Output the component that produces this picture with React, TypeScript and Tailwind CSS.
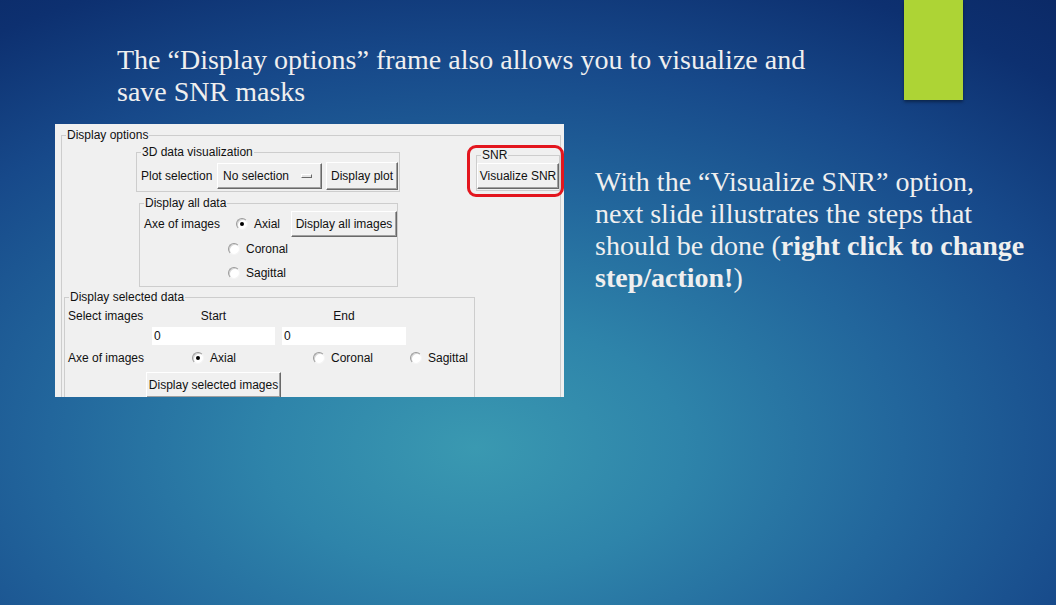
import React from "react";

const raised =
  "flex items-center border border-t-white border-l-white border-r-[#696969] border-b-[#696969] bg-[#f0f0f0] shadow-[inset_-1px_-1px_0_#a0a0a0]";

function Frame({
  label,
  className,
  children,
}: {
  label: string;
  className: string;
  children: React.ReactNode;
}) {
  return (
    <fieldset className={`border border-[#cdcdcd] ${className}`}>
      <legend className="ml-[4px] px-[1px] leading-[14px]">{label}</legend>
      {children}
    </fieldset>
  );
}

function Radio({ label, checked }: { label: string; checked?: boolean }) {
  return (
    <span className="flex items-center gap-[6px]">
      <span className="flex h-[12px] w-[12px] items-center justify-center rounded-full border border-t-[#9a9a9a] border-l-[#9a9a9a] border-r-[#f4f4f4] border-b-[#f4f4f4] bg-white shadow-[inset_1px_1px_0_#d4d4d4]">
        {checked && <span className="h-[4px] w-[4px] rounded-full bg-black" />}
      </span>
      <span>{label}</span>
    </span>
  );
}

function Panel() {
  return (
    <div className="relative h-[273px] w-[509px] shrink-0 overflow-hidden bg-[#f0f0f0] font-['Liberation_Sans',Arial,sans-serif] text-[12px] leading-[14px] text-[#111]">
      <Frame label="Display options" className="ml-[6px] mt-[4px] h-[300px] w-[500px]">
        <div className="flex">
          <div className="ml-[74px] flex flex-col">
            {/* 3D data visualization */}
            <Frame label="3D data visualization" className="mt-[3px] w-[264px] pb-[1px]">
              <div className="mt-[3px] flex h-[28px] items-center pl-[4px]">
                <span className="w-[76px]">Plot selection</span>
                <div className={`${raised} h-[26px] w-[105px] justify-between pl-[5px] pr-[9px]`}>
                  <span>No selection</span>
                  <span className="h-[4px] w-[11px] border border-t-white border-l-white border-r-[#696969] border-b-[#696969] bg-[#e4e4e4]" />
                </div>
                <div className={`${raised} ml-[4px] h-[28px] w-[72px] justify-center`}>Display plot</div>
              </div>
            </Frame>

            {/* Display all data */}
            <Frame label="Display all data" className="ml-[3px] mt-[4px] w-[259px] pb-[1px]">
              <div className="mt-[1px] flex h-[26px] items-center pl-[4px]">
                <span className="w-[92px]">Axe of images</span>
                <Radio label="Axial" checked />
                <div className={`${raised} ml-auto h-[26px] w-[106px] justify-center`}>Display all images</div>
              </div>
              <div className="flex h-[24px] items-center pl-[88px]">
                <Radio label="Coronal" />
              </div>
              <div className="flex h-[24px] items-center pl-[88px]">
                <Radio label="Sagittal" />
              </div>
            </Frame>
          </div>

          {/* SNR */}
          <Frame label="SNR" className="ml-[76px] mt-[6px] w-[84px] self-start pb-[1px]">
            <div className={`${raised} mt-[1px] h-[26px] w-full justify-center`}>Visualize SNR</div>
          </Frame>
        </div>

        {/* Display selected data */}
        <Frame label="Display selected data" className="ml-[2px] mt-[3px] w-[411px] pb-[20px]">
          <div className="mt-[4px] flex h-[16px] items-center">
            <span className="w-[87px] pl-[3px]">Select images</span>
            <span className="w-[123px] text-center">Start</span>
            <span className="ml-[7px] w-[124px] text-center">End</span>
          </div>
          <div className="mt-[3px] flex h-[18px]">
            <div className="ml-[87px] flex w-[123px] items-center bg-white pl-[2px]">0</div>
            <div className="ml-[7px] flex w-[124px] items-center bg-white pl-[2px]">0</div>
          </div>
          <div className="mt-[5px] flex h-[16px] items-center">
            <span className="w-[87px] pl-[3px]">Axe of images</span>
            <span className="ml-[40px] w-[90px]">
              <Radio label="Axial" checked />
            </span>
            <span className="ml-[31px] w-[97px]">
              <Radio label="Coronal" />
            </span>
            <Radio label="Sagittal" />
          </div>
          <div className="mt-[6px] flex h-[26px]">
            <div className={`${raised} ml-[81px] h-[26px] w-[135px] justify-center`}>Display selected images</div>
          </div>
        </Frame>
      </Frame>

      {/* annotation */}
      <div className="pointer-events-none absolute left-[412px] top-[21px] h-[52px] w-[97px] rounded-[9px] border-[3px] border-[#e3161e]" />
    </div>
  );
}

export default function App() {
  return (
    <div className="relative flex h-[605px] w-[1056px] flex-col overflow-hidden bg-[radial-gradient(ellipse_90%_95%_at_45%_74%,#3a99b1_0%,#2e84aa_22%,#22669c_45%,#17498a_68%,#0d3070_88%,#0b2966_100%)] font-['Liberation_Serif','Times_New_Roman',serif] text-[#efefef]">
      {/* accent block */}
      <div className="absolute left-[904px] top-0 h-[100px] w-[59px] bg-[#add435] shadow-[0_2px_3px_rgba(0,0,0,0.4)]" />

      <h1 className="h-[124px] pl-[117px] pt-[44px] text-[28px] font-normal leading-[32px]">
        The “Display options” frame also allows you to visualize and
        <br />
        save SNR masks
      </h1>

      <div className="flex">
        <div className="ml-[55px]">
          <Panel />
        </div>
        <p className="ml-[31px] mt-[42px] whitespace-nowrap text-[28px] leading-[32px]">
          With the “Visualize SNR” option,
          <br />
          next slide illustrates the steps that
          <br />
          should be done (<b>right click to change</b>
          <br />
          <b>step/action!</b>)
        </p>
      </div>
    </div>
  );
}
